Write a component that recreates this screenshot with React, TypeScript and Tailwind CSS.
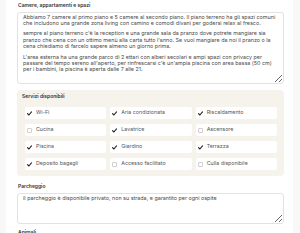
import React from "react";

interface Service {
  label: string;
  checked: boolean;
}

const SERVICES: Service[] = [
  { label: "Wi-Fi", checked: true },
  { label: "Aria condizionata", checked: true },
  { label: "Riscaldamento", checked: true },
  { label: "Cucina", checked: false },
  { label: "Lavatrice", checked: true },
  { label: "Ascensore", checked: false },
  { label: "Piscina", checked: true },
  { label: "Giardino", checked: true },
  { label: "Terrazza", checked: true },
  { label: "Deposito bagagli", checked: true },
  { label: "Accesso facilitato", checked: false },
  { label: "Culla disponibile", checked: false },
];

// lines kept as in the saved description, wrapped like the textarea shows them
const PARAGRAPHS: string[][] = [
  [
    "Abbiamo 7 camere al primo piano e 5 camere al secondo piano. Il piano terreno ha gli spazi comuni",
    "che includono una grande zona living con camino e comodi divani per godersi relax al fresco.",
  ],
  [
    "sempre al piano terreno c'è la reception e una grande sala da pranzo dove potrete mangiare sia",
    "pranzo che cena con un ottimo menù alla carta tutto l'anno. Se vuoi mangiare da noi il pranzo o la",
    "cena chiediamo di farcelo sapere almeno un giorno prima.",
  ],
  [
    "L'area esterna ha una grande parco di 2 ettari con alberi secolari e ampi spazi con privacy per",
    "passare del tempo sereno all'aperto, per rinfrescarsi c'è un'ampia piscina con area bassa (50 cm)",
    "per i bambini, la piscina è aperta dalle 7 alle 21.",
  ],
];

function Check({ checked }: { checked: boolean }) {
  if (!checked) {
    return <span className="block h-[5px] w-[5px] rounded-[1px] border-[0.5px] border-[#cfcfcf] bg-white" />;
  }
  return (
    <svg viewBox="0 0 10 10" className="block h-[5px] w-[5px]">
      <path d="M1 5.2 L3.8 8 L9 1.8" fill="none" stroke="#222" strokeWidth="2.2" strokeLinecap="round" strokeLinejoin="round" />
    </svg>
  );
}

function Label({ children }: { children: React.ReactNode }) {
  return <div className="text-[5px] font-semibold leading-[6px] text-[#333]">{children}</div>;
}

export default function App() {
  return (
    <div className="min-h-screen bg-[#f8f8f8] pl-[6px] pr-[7px] font-['Inter','Noto_Sans',sans-serif]">
      <div className="min-h-screen bg-white pl-[11px] pr-[9px] pt-[2px]">
        {/* Camere */}
        <div className="pl-[1px]">
          <Label>Camere, appartamenti e spazi</Label>
        </div>
        <div className="mt-[4px] h-[72px] resize-y overflow-hidden rounded-[3px] border-[0.5px] border-[#e2e2e2] px-[5px] pt-[0.5px] text-[5.4px] leading-[6.3px] text-[#4a4a4a]">
          {PARAGRAPHS.map((lines, i) => (
            <p key={i} className={i > 0 ? "mt-[4.4px] whitespace-nowrap" : "whitespace-nowrap"}>
              {lines.map((l, j) => (
                <React.Fragment key={j}>
                  {j > 0 && <br />}
                  {l}
                </React.Fragment>
              ))}
            </p>
          ))}
        </div>

        {/* Servizi */}
        <div className="mt-[6px] rounded-[4px] bg-[#f6f3ec] pl-[8px] pr-[7px] pt-[3px] pb-[6px]">
          <div className="-ml-[3px]">
            <Label>Servizi disponibili</Label>
          </div>
          <div className="mt-[8px] grid grid-cols-3 gap-x-[4px] gap-y-[5px]">
            {SERVICES.map((s) => (
              <div key={s.label} className="flex h-[12px] items-center gap-[4px] rounded-[2px] bg-white pl-[2px] text-[5.3px] text-[#555]">
                <Check checked={s.checked} />
                <span>{s.label}</span>
              </div>
            ))}
          </div>
        </div>

        {/* Parcheggio */}
        <div className="mt-[7px] pl-[1px]">
          <Label>Parcheggio</Label>
        </div>
        <div className="mt-[4px] h-[31px] resize-y overflow-hidden rounded-[3px] border-[0.5px] border-[#e2e2e2] px-[5px] pt-[1px] text-[5.4px] leading-[6.3px] text-[#4a4a4a]">
          il parcheggio è disponibile privato, non su strada, e garantito per ogni ospite
        </div>

        {/* Animali */}
        <div className="mt-[5px] pl-[1px]">
          <Label>Animali</Label>
        </div>
      </div>
    </div>
  );
}
